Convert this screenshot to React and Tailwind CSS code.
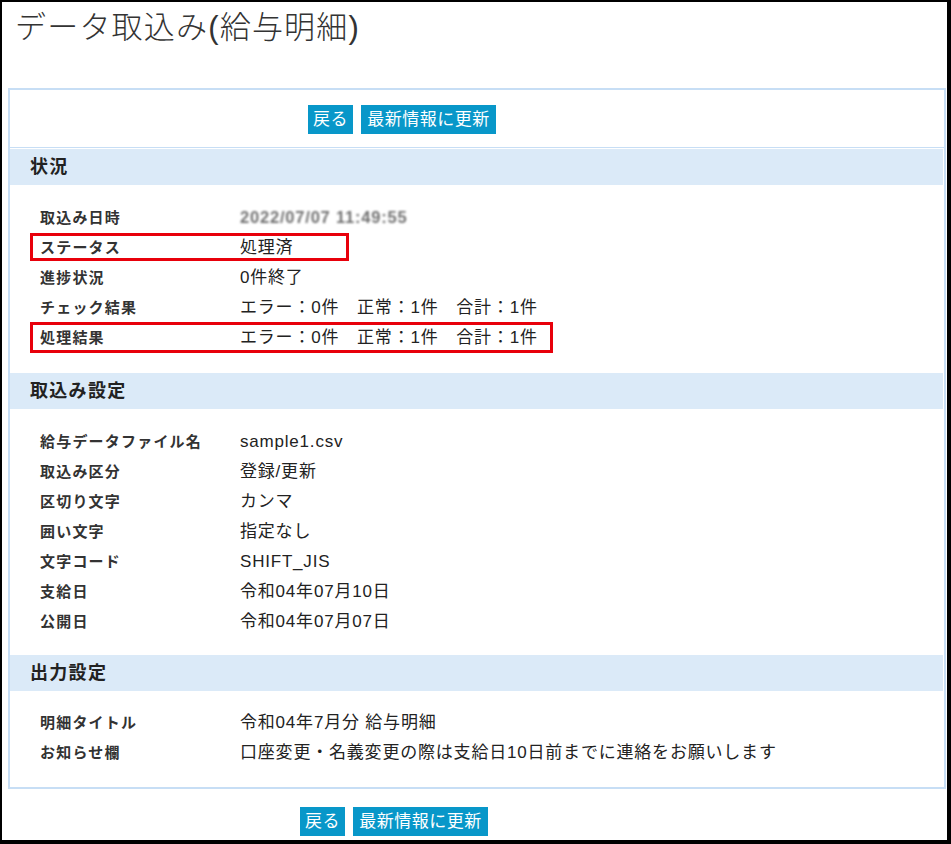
import React from "react";

const Row = ({ label, children }) => (
  <div className="flex h-[30px] items-center">
    <div className="w-[200px] shrink-0 text-[15px] font-bold tracking-[1.2px] text-[#333]">{label}</div>
    <div className="text-[17px] tracking-[0.8px] text-[#222] whitespace-nowrap">{children}</div>
  </div>
);

const Header = ({ children }) => (
  <div className="flex h-[36px] items-center bg-[#dbeaf8] pl-[20px] mr-[1px] text-[18px] font-bold tracking-[1.3px] text-[#222]">
    {children}
  </div>
);

const Buttons = () => (
  <div className="flex gap-[8px]">
    <button className="flex h-[29px] w-[45px] items-center justify-center bg-[#0897c9] text-[17px] tracking-[0.5px] text-white">戻る</button>
    <button className="flex h-[29px] w-[135px] items-center justify-center bg-[#0897c9] text-[17px] tracking-[0.5px] text-white">最新情報に更新</button>
  </div>
);

export default function App() {
  return (
    <div className="relative box-border h-[844px] w-[951px] overflow-hidden border-l-2 border-t-2 border-r-4 border-b-4 border-black bg-white font-['Liberation_Sans','Noto_Sans_CJK_JP',sans-serif]">
      <div className="h-[86px] pl-[13px] pt-[8px]">
        <h1 className="text-[31px] font-light leading-[36px] tracking-[1.2px] text-[#333]">データ取込み(給与明細)</h1>
      </div>

      <div className="ml-[6px] w-[938px] border-2 border-[#c7def5]">
        <div className="border-b border-[#c7def5] pl-[298px] pt-[15px] pb-[13px]">
          <Buttons />
        </div>
        <div className="mt-[1px]">
          <Header>状況</Header>
          <div className="pl-[30px] pt-[18px] pb-[20px]">
            <Row label="取込み日時">
              <span className="inline-block text-[16.5px] font-bold text-[#707070] blur-[0.8px]">2022/07/07 11:49:55</span>
            </Row>
            <Row label="ステータス">処理済</Row>
            <Row label="進捗状況">0件終了</Row>
            <Row label="チェック結果">エラー：0件　正常：1件　合計：1件</Row>
            <Row label="処理結果">エラー：0件　正常：1件　合計：1件</Row>
          </div>

          <Header>取込み設定</Header>
          <div className="pl-[30px] pt-[18px] pb-[18px]">
            <Row label="給与データファイル名">sample1.csv</Row>
            <Row label="取込み区分">登録/更新</Row>
            <Row label="区切り文字">カンマ</Row>
            <Row label="囲い文字">指定なし</Row>
            <Row label="文字コード">SHIFT_JIS</Row>
            <Row label="支給日">令和04年07月10日</Row>
            <Row label="公開日">令和04年07月07日</Row>
          </div>

          <Header>出力設定</Header>
          <div className="pl-[30px] pt-[17px] pb-[19px]">
            <Row label="明細タイトル">令和04年7月分 給与明細</Row>
            <Row label="お知らせ欄">口座変更・名義変更の際は支給日10日前までに連絡をお願いします</Row>
          </div>
        </div>
      </div>

      <div className="mt-[18px] pl-[298px]">
        <Buttons />
      </div>

      <div className="absolute left-[28px] top-[231px] h-[28px] w-[319px] border-[3px] border-[#e8000b]"></div>
      <div className="absolute left-[28px] top-[320px] h-[31px] w-[523px] border-[3px] border-[#e8000b]"></div>
    </div>
  );
}
